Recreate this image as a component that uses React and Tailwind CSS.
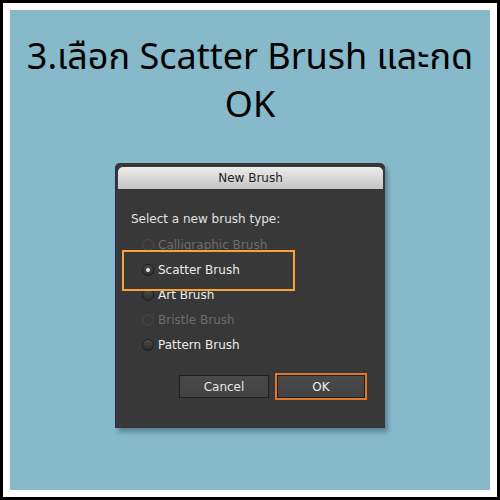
const options = [
  { label: "Calligraphic Brush", disabled: true },
  { label: "Scatter Brush", checked: true },
  { label: "Art Brush" },
  { label: "Bristle Brush", disabled: true },
  { label: "Pattern Brush" },
];

function Radio({ checked, disabled }) {
  return (
    <span
      className={
        "flex h-[12px] w-[12px] items-center justify-center rounded-full border " +
        (disabled
          ? "border-[#4a4a4a] bg-[#3a3a3a]"
          : "border-[#1c1c1c] bg-gradient-to-b from-[#4c4c4c] to-[#2e2e2e]")
      }
    >
      {checked && <span className="h-[4px] w-[4px] rounded-full bg-[#e8e8e8]" />}
    </span>
  );
}

function Dialog() {
  return (
    <div className="relative w-[270px] rounded-t-[5px] bg-[#383838] px-[2px] pt-[4px] shadow-[3px_4px_4px_rgba(40,70,90,0.45)] border-l border-[#2e2a55]">
      <div className="flex h-[22px] items-center justify-center rounded-t-[5px] bg-gradient-to-b from-[#ececec] to-[#c4c4c4] text-[12px] text-[#222]">
        New Brush
      </div>
      <div className="px-[13px] pt-[23px] pb-[28px] text-[12px] text-[#e2e2e2]">
        <p className="leading-[15px]">Select a new brush type:</p>
        <div className="mt-[5px] flex flex-col">
          {options.map((o) => (
            <div key={o.label} className="flex h-[25px] items-center gap-[4px] pl-[11px]">
              <Radio checked={o.checked} disabled={o.disabled} />
              <span className={o.disabled ? "text-[#6c6c6c]" : "text-[#ececec]"}>{o.label}</span>
            </div>
          ))}
        </div>
        <div className="mt-[16px] flex justify-end gap-[6px] pr-[3px]">
          <button className="mt-[2px] h-[23px] w-[90px] border border-[#1e1e1e] bg-gradient-to-b from-[#4a4a4a] to-[#424242] text-[12px] text-[#e6e6e6]">
            Cancel
          </button>
          <div className="border-2 border-[#e0782a]">
            <button className="h-[23px] w-[88px] border border-[#1e1e1e] bg-gradient-to-b from-[#4a4a4a] to-[#424242] text-[12px] text-[#f0f0f0]">
              OK
            </button>
          </div>
        </div>
      </div>
      <div className="absolute left-[6px] top-[87px] h-[41px] w-[173px] border-2 border-[#f5a435]" />
    </div>
  );
}

export default function App() {
  return (
    <div className="h-[500px] w-[500px] border-[3px] border-black bg-white p-[7px] font-['DejaVu_Sans',sans-serif]">
      <div className="flex h-full w-full flex-col items-center bg-[#86b9ca]">
        <h1 className="mt-[24px] text-center font-['Noto_Sans_Thai','Noto_Sans',sans-serif] text-[36px] leading-[48px] text-black">
          3.เลือก Scatter Brush และกด
          <br />
          OK
        </h1>
        <div className="mt-[33px]">
          <Dialog />
        </div>
      </div>
    </div>
  );
}
